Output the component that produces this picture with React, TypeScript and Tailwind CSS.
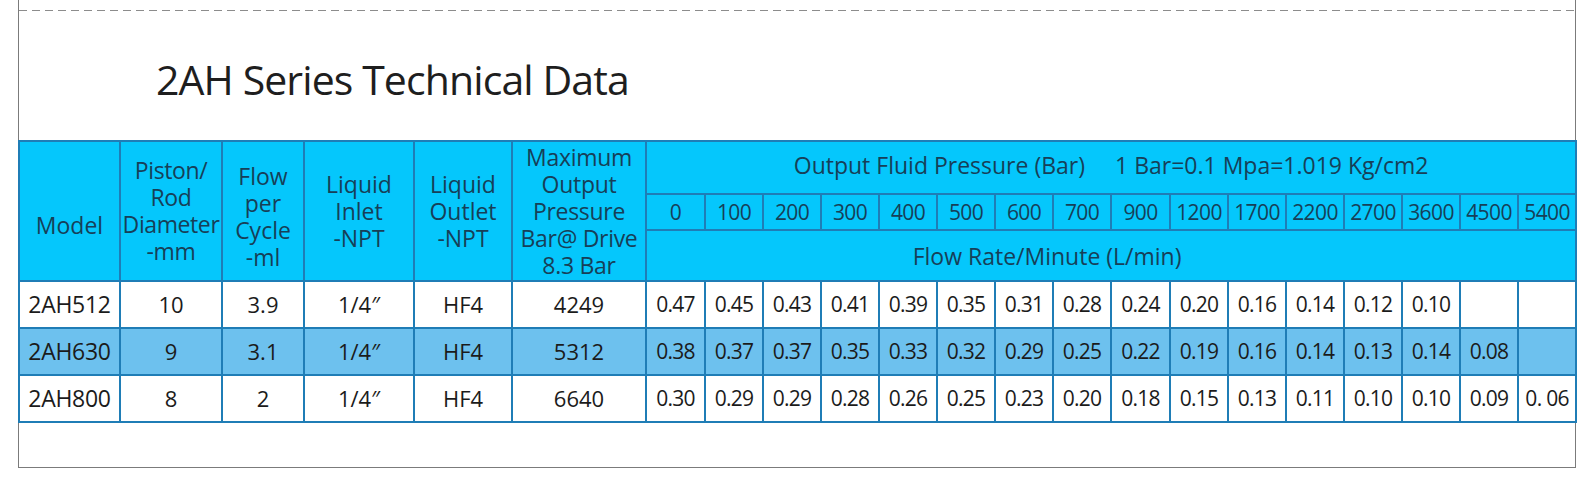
const pressures = ["0", "100", "200", "300", "400", "500", "600", "700", "900", "1200", "1700", "2200", "2700", "3600", "4500", "5400"];

const rows = [
  {
    model: "2AH512", rod: "10", flow: "3.9", inlet: "1/4″", outlet: "HF4", max: "4249",
    rates: ["0.47", "0.45", "0.43", "0.41", "0.39", "0.35", "0.31", "0.28", "0.24", "0.20", "0.16", "0.14", "0.12", "0.10", "", ""],
  },
  {
    model: "2AH630", rod: "9", flow: "3.1", inlet: "1/4″", outlet: "HF4", max: "5312",
    rates: ["0.38", "0.37", "0.37", "0.35", "0.33", "0.32", "0.29", "0.25", "0.22", "0.19", "0.16", "0.14", "0.13", "0.14", "0.08", ""],
  },
  {
    model: "2AH800", rod: "8", flow: "2", inlet: "1/4″", outlet: "HF4", max: "6640",
    rates: ["0.30", "0.29", "0.29", "0.28", "0.26", "0.25", "0.23", "0.20", "0.18", "0.15", "0.13", "0.11", "0.10", "0.10", "0.09", "0. 06"],
  },
];

const head = "border-2 border-[#1f7db6] bg-[#05c7fc] text-[#173f58] font-normal";
const cell = "border-2 border-[#1f7db6] text-center p-0";

export default function App() {
  return (
    <div className="w-[1594px] h-[484px] bg-white overflow-hidden font-['Open_Sans',sans-serif]">
      <div className="ml-[18px] w-[1558px] h-[468px] border-x border-b border-[#7b7b7b] flex flex-col">
        <div className="mt-[10px] h-px bg-[repeating-linear-gradient(90deg,#8c8c8c_0_8px,transparent_8px_13px)]" />
        <h1 className="pl-[137px] pt-[40px] h-[129px] text-[41px] leading-[56px] text-[#1e1e1e] tracking-[-0.9px]">
          2AH Series Technical Data
        </h1>
        <table className="-mx-px w-[1559px] table-fixed border-collapse leading-[27px]">
          <colgroup>
            <col className="w-[101px]" />
            <col className="w-[102px]" />
            <col className="w-[82px]" />
            <col className="w-[110px]" />
            <col className="w-[98px]" />
            <col className="w-[134px]" />
            {pressures.map((p, i) => (
              <col key={p} className={i === 0 || i === 8 ? "w-[59px]" : "w-[58px]"} />
            ))}
          </colgroup>
          <thead className="text-[23px]">
            <tr className="h-[53px]">
              <th rowSpan={3} className={`${head} pt-[28px]`}>Model</th>
              <th rowSpan={3} className={`${head} whitespace-nowrap tracking-[-0.4px]`}>
                Piston/<br />Rod<br />Diameter<br />-mm
              </th>
              <th rowSpan={3} className={`${head} pt-[12px]`}>
                Flow<br />per<br />Cycle<br />-ml
              </th>
              <th rowSpan={3} className={head}>
                Liquid<br />Inlet<br />-NPT
              </th>
              <th rowSpan={3} className={head}>
                Liquid<br />Outlet<br />-NPT
              </th>
              <th rowSpan={3} className={`${head} whitespace-nowrap tracking-[-0.3px]`}>
                Maximum<br />Output<br />Pressure<br />Bar@ Drive<br />8.3 Bar
              </th>
              <th colSpan={16} className={`${head} text-[23px] pb-[4px]`}>
                Output Fluid Pressure (Bar)<span className="ml-[30px]">1 Bar=0.1 Mpa=1.019 Kg/cm2</span>
              </th>
            </tr>
            <tr className="h-[36px] text-[21px] tracking-[-0.6px]">
              {pressures.map((p) => (
                <th key={p} className={`${head} p-0`}>{p}</th>
              ))}
            </tr>
            <tr className="h-[51px]">
              <th colSpan={16} className={`${head} text-[23px] pr-[128px] pt-[2px]`}>
                Flow Rate/Minute (L/min)
              </th>
            </tr>
          </thead>
          <tbody className="text-[22px] text-[#1b1b1b]">
            {rows.map((r, i) => (
              <tr key={r.model} className={`h-[47px] ${i === 1 ? "bg-[#6dc1ee]" : "bg-white"}`}>
                <td className={`${cell} text-[23px] tracking-[-0.3px]`}>{r.model}</td>
                <td className={cell}>{r.rod}</td>
                <td className={cell}>{r.flow}</td>
                <td className={cell}>{r.inlet}</td>
                <td className={cell}>{r.outlet}</td>
                <td className={cell}>{r.max}</td>
                {r.rates.map((v, j) => (
                  <td key={j} className={`${cell} text-[21px] tracking-[-0.7px]`}>{v}</td>
                ))}
              </tr>
            ))}
          </tbody>
        </table>
      </div>
    </div>
  );
}
